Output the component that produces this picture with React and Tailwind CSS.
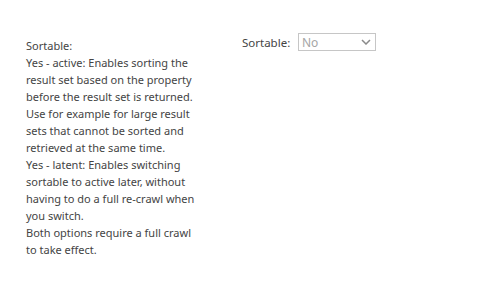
import React from 'react';

const lines = [
    'Sortable:',
    'Yes - active: Enables sorting the',
    'result set based on the property',
    'before the result set is returned.',
    'Use for example for large result',
    'sets that cannot be sorted and',
    'retrieved at the same time.',
    'Yes - latent: Enables switching',
    'sortable to active later, without',
    'having to do a full re-crawl when',
    'you switch.',
    'Both options require a full crawl',
    'to take effect.',
];

const App = () => {
    return (
        <div className="w-[489px] h-[289px] bg-white text-[#444444] text-[11px] leading-[17px]" style={{ fontFamily: '"Segoe UI", "Noto Sans", sans-serif' }}>
            <div className="flex pt-[33px] pl-[26px]">
                {/* description */}
                <div className="w-[216px] pt-[4px]">
                    {lines.map((l, i) => (
                        <div key={i} className="whitespace-nowrap">{l}</div>
                    ))}
                </div>

                {/* field */}
                <div className="flex items-center h-[18px]">
                    <span className="w-[56px] text-[11.5px]">Sortable:</span>
                    <div className="w-[78px] h-[18px] border border-[#c6c6c6] flex items-center justify-between pl-[3px] pr-[4px] text-[12px] text-[#a6a6a6]">
                        <span>No</span>
                        <svg width="10" height="6" viewBox="0 0 10 6" fill="none">
                            <path d="M1 1l4 4 4-4" stroke="#8a8a8a" strokeWidth="1.5" />
                        </svg>
                    </div>
                </div>
            </div>
        </div>
    );
};

export default App;
